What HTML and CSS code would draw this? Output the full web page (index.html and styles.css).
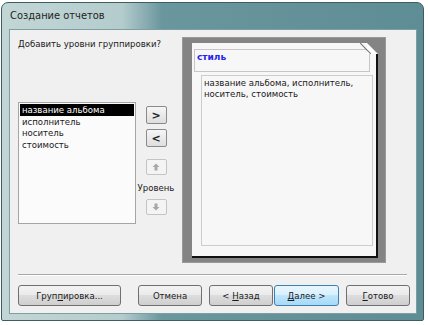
FILE: index.html
```html
<!DOCTYPE html>
<html lang="ru">
<head>
    <meta charset="UTF-8">
    <title>Создание отчетов</title>
    <link rel="stylesheet" href="styles.css">
</head>
<body>
    <div class="window">
        <div class="title-bar">Создание отчетов</div>
        <div class="client">
            <div class="main-row">
                <div class="left-col">
                    <div class="question">Добавить уровни группировки?</div>
                    <div class="field-list">
                        <div class="item selected">название альбома</div>
                        <div class="item">исполнитель</div>
                        <div class="item">носитель</div>
                        <div class="item">стоимость</div>
                    </div>
                </div>
                <div class="mid-col">
                    <button class="move-btn">&gt;</button>
                    <button class="move-btn">&lt;</button>
                    <button class="level-btn up">
                        <svg width="8" height="8" viewBox="0 0 8 8"><path d="M4 0.5 L7.5 4 L5.5 4 L5.5 7.5 L2.5 7.5 L2.5 4 L0.5 4 Z" fill="#a8a8a8"/></svg>
                    </button>
                    <div class="level-label">Уровень</div>
                    <button class="level-btn down">
                        <svg width="8" height="8" viewBox="0 0 8 8"><path d="M4 7.5 L7.5 4 L5.5 4 L5.5 0.5 L2.5 0.5 L2.5 4 L0.5 4 Z" fill="#a8a8a8"/></svg>
                    </button>
                </div>
                <div class="preview">
                    <div class="page">
                        <div class="fold"></div>
                        <div class="page-header">стиль</div>
                        <div class="page-body">название альбома, исполнитель, носитель, стоимость</div>
                    </div>
                </div>
            </div>
            <div class="separator"></div>
            <div class="button-row">
                <button class="btn btn-group">Груп<u>п</u>ировка...</button>
                <button class="btn btn-cancel">Отмена</button>
                <button class="btn btn-back">&lt; <u>Н</u>азад</button>
                <button class="btn btn-next default"><u>Д</u>алее &gt;</button>
                <button class="btn btn-done"><u>Г</u>отово</button>
            </div>
        </div>
    </div>
</body>
</html>
```

FILE: styles.css
```css
body {
    margin: 0;
    padding: 0;
    background-color: #ffffff;
    font-family: "DejaVu Sans Condensed", "DejaVu Sans", sans-serif;
    font-size: 9.5px;
    color: #1a1a1a;
}

.window {
    margin: 2px 0 0 1px;
    width: 408px;
    height: 311px;
    padding: 0 6px 6px 7px;
    border: 1px solid #3e5c62;
    border-radius: 7px 7px 2px 2px;
    background: linear-gradient(to right, #c3d6d6 0px, #b4cccd 120px, #6a969d 160px, #5f8d95 100%);
}

.title-bar {
    height: 26px;
    line-height: 26px;
    padding-left: 1px;
    font-family: "DejaVu Sans Condensed", "DejaVu Sans", sans-serif;
    font-size: 11px;
    color: #1e1e1e;
}

.client {
    height: 283px;
    background-color: #f0f0f0;
    border: 1px solid #7d9ea3;
    display: flex;
    flex-direction: column;
}

.main-row {
    display: flex;
    padding: 7px 0 0 8px;
}

.left-col {
    width: 118px;
    display: flex;
    flex-direction: column;
}

.question {
    height: 13px;
    line-height: 13px;
    white-space: nowrap;
}

.field-list {
    margin-top: 52px;
    height: 118px;
    background-color: #fbfbfb;
    border: 1px solid #a5a5a5;
    padding: 1px;
}

.item {
    height: 11.5px;
    line-height: 11px;
    padding-left: 2px;
}

.item.selected {
    background-color: #000000;
    color: #ffffff;
}

.mid-col {
    width: 40px;
    margin-right: 6px;
    display: flex;
    flex-direction: column;
    align-items: center;
    padding-top: 69px;
}

.move-btn {
    width: 21px;
    height: 18px;
    margin-bottom: 5px;
    padding: 0;
    border: 1px solid #8a8a8a;
    border-radius: 2px;
    background: linear-gradient(#f6f6f6, #dedede);
    font-family: "DejaVu Sans", sans-serif;
    font-size: 11px;
    font-weight: bold;
    color: #222;
}

.level-btn {
    width: 21px;
    height: 16px;
    padding: 0;
    border: 1px solid #c4c4c4;
    border-radius: 2px;
    background: #f4f4f4;
    display: flex;
    align-items: center;
    justify-content: center;
}

.level-btn.up {
    margin-top: 7px;
}

.level-label {
    margin: 6px 0 5px 0;
    white-space: nowrap;
    line-height: 13px;
}

.preview {
    width: 204px;
    height: 226px;
    background-color: #848484;
    border: 1px solid #9a9a9a;
    box-sizing: border-box;
    padding: 5px 0 0 9px;
}

.page {
    position: relative;
    width: 186px;
    height: 215px;
    box-sizing: border-box;
    background-color: #f7f7f7;
    border-right: 2px solid #111;
    border-bottom: 2px solid #111;
    padding: 6px 0 0 2px;
}

.fold {
    position: absolute;
    top: 0;
    right: -2px;
    width: 0;
    height: 0;
    border-style: solid;
    border-width: 0 11px 11px 0;
    border-color: transparent #848484 #ffffff transparent;
}

.fold::after {
    content: "";
    position: absolute;
    top: 0;
    left: -11px;
    width: 15px;
    height: 1px;
    background-color: #707070;
    transform: translate(2px, 5px) rotate(45deg);
}

.page-header {
    width: 176px;
    height: 23px;
    box-sizing: border-box;
    border: 1px solid #c6c6c6;
    padding: 2px 0 0 2px;
    color: #2424ee;
    font-weight: bold;
    font-family: "DejaVu Sans", sans-serif;
    font-size: 9px;
}

.page-body {
    margin: 3px 0 0 7px;
    width: 172px;
    height: 171px;
    box-sizing: border-box;
    border: 1px solid #cdcdcd;
    padding: 1px 2px;
    line-height: 11px;
}

.separator {
    margin: 11px 9px 0 8px;
    height: 1px;
    background-color: #a8a8a8;
    border-bottom: 1px solid #ffffff;
}

.button-row {
    display: flex;
    padding: 9px 0 0 8px;
}

.btn {
    height: 21px;
    padding: 0;
    border: 1px solid #707070;
    border-radius: 3px;
    background: linear-gradient(#f3f3f3 0%, #ebebeb 45%, #dddddd 50%, #cfcfcf 100%);
    font-family: "DejaVu Sans Condensed", "DejaVu Sans", sans-serif;
    font-size: 9.5px;
    color: #1a1a1a;
}

.btn-group {
    width: 103px;
    margin-right: 17px;
}

.btn-cancel {
    width: 64px;
    margin-right: 7px;
}

.btn-back {
    width: 64px;
    margin-right: 1px;
}

.btn-next {
    width: 65px;
    margin-right: 7px;
}

.btn-done {
    width: 64px;
}

.btn.default {
    border-color: #3c7fb1;
    background: linear-gradient(#eaf6fd 0%, #d9f0fc 45%, #bee6fd 50%, #a7d9f5 100%);
}
```
